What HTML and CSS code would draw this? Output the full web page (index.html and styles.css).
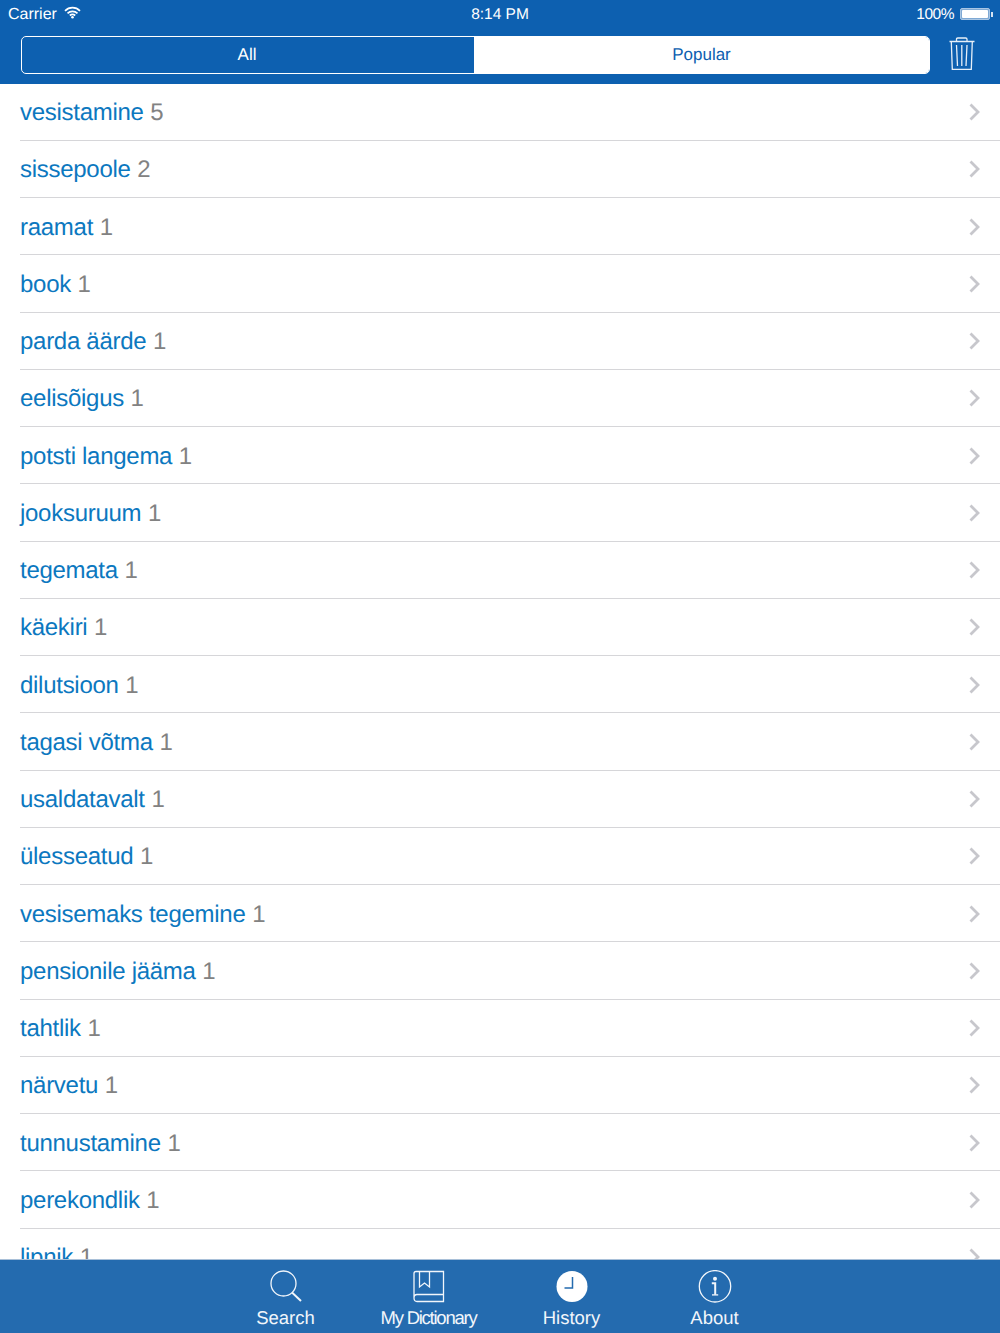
FILE: index.html
```html
<!DOCTYPE html>
<html lang="en">
<head>
    <meta charset="UTF-8" />
    <title>History</title>
    <link rel="stylesheet" href="styles.css">
</head>
<body>
    <div class="app">
        <header class="top">
            <div class="status">
                <div class="status-left">
                    <span>Carrier</span>
                    <svg class="wifi" width="17" height="13" viewBox="0 0 17 13">
                        <path d="M1 4.800C5.200 .6 11.800 .6 16 4.800" />
                        <path d="M3.500 7.300C6.200 4.700 10.800 4.700 13.500 7.300" />
                        <path d="M5.800 9.500C7.300 8.200 9.700 8.200 11.200 9.500" />
                        <circle cx="8.500" cy="11.300" r="1.300" />
                    </svg>
                </div>
                <div class="status-time">8:14 PM</div>
                <div class="status-right">
                    <span class="percent">100%</span>
                    <div class="battery"><div class="battery-fill"></div></div>
                    <div class="battery-tip"></div>
                </div>
            </div>
            <div class="toolbar">
                <div class="segments">
                    <div class="segment segment-on">All</div>
                    <div class="segment segment-off">Popular</div>
                </div>
                <svg class="trash" width="26" height="33" viewBox="0 0 26 33">
                    <path d="M.5 4.500H25.500M7.500 4.500V2.300Q7.500 1 8.800 1H16.700Q18 1 18 2.300V4.500" />
                    <path d="M2.300 4.500L3.300 32.300H22.300L23.300 4.500" />
                    <path d="M7.500 8L8.500 29M12.800 8V29M18 8L17 29" />
                </svg>
            </div>
        </header>

        <main class="list">
            <div class="row"><div class="row-text"><span class="word">vesistamine</span> <span class="count">5</span></div><svg class="chevron" width="11" height="18" viewBox="0 0 11 18"><path d="M1.500 1.500L9 9L1.500 16.500" /></svg></div>
            <div class="row"><div class="row-text"><span class="word">sissepoole</span> <span class="count">2</span></div><svg class="chevron" width="11" height="18" viewBox="0 0 11 18"><path d="M1.500 1.500L9 9L1.500 16.500" /></svg></div>
            <div class="row"><div class="row-text"><span class="word">raamat</span> <span class="count">1</span></div><svg class="chevron" width="11" height="18" viewBox="0 0 11 18"><path d="M1.500 1.500L9 9L1.500 16.500" /></svg></div>
            <div class="row"><div class="row-text"><span class="word">book</span> <span class="count">1</span></div><svg class="chevron" width="11" height="18" viewBox="0 0 11 18"><path d="M1.500 1.500L9 9L1.500 16.500" /></svg></div>
            <div class="row"><div class="row-text"><span class="word">parda äärde</span> <span class="count">1</span></div><svg class="chevron" width="11" height="18" viewBox="0 0 11 18"><path d="M1.500 1.500L9 9L1.500 16.500" /></svg></div>
            <div class="row"><div class="row-text"><span class="word">eelisõigus</span> <span class="count">1</span></div><svg class="chevron" width="11" height="18" viewBox="0 0 11 18"><path d="M1.500 1.500L9 9L1.500 16.500" /></svg></div>
            <div class="row"><div class="row-text"><span class="word">potsti langema</span> <span class="count">1</span></div><svg class="chevron" width="11" height="18" viewBox="0 0 11 18"><path d="M1.500 1.500L9 9L1.500 16.500" /></svg></div>
            <div class="row"><div class="row-text"><span class="word">jooksuruum</span> <span class="count">1</span></div><svg class="chevron" width="11" height="18" viewBox="0 0 11 18"><path d="M1.500 1.500L9 9L1.500 16.500" /></svg></div>
            <div class="row"><div class="row-text"><span class="word">tegemata</span> <span class="count">1</span></div><svg class="chevron" width="11" height="18" viewBox="0 0 11 18"><path d="M1.500 1.500L9 9L1.500 16.500" /></svg></div>
            <div class="row"><div class="row-text"><span class="word">käekiri</span> <span class="count">1</span></div><svg class="chevron" width="11" height="18" viewBox="0 0 11 18"><path d="M1.500 1.500L9 9L1.500 16.500" /></svg></div>
            <div class="row"><div class="row-text"><span class="word">dilutsioon</span> <span class="count">1</span></div><svg class="chevron" width="11" height="18" viewBox="0 0 11 18"><path d="M1.500 1.500L9 9L1.500 16.500" /></svg></div>
            <div class="row"><div class="row-text"><span class="word">tagasi võtma</span> <span class="count">1</span></div><svg class="chevron" width="11" height="18" viewBox="0 0 11 18"><path d="M1.500 1.500L9 9L1.500 16.500" /></svg></div>
            <div class="row"><div class="row-text"><span class="word">usaldatavalt</span> <span class="count">1</span></div><svg class="chevron" width="11" height="18" viewBox="0 0 11 18"><path d="M1.500 1.500L9 9L1.500 16.500" /></svg></div>
            <div class="row"><div class="row-text"><span class="word">ülesseatud</span> <span class="count">1</span></div><svg class="chevron" width="11" height="18" viewBox="0 0 11 18"><path d="M1.500 1.500L9 9L1.500 16.500" /></svg></div>
            <div class="row"><div class="row-text"><span class="word">vesisemaks tegemine</span> <span class="count">1</span></div><svg class="chevron" width="11" height="18" viewBox="0 0 11 18"><path d="M1.500 1.500L9 9L1.500 16.500" /></svg></div>
            <div class="row"><div class="row-text"><span class="word">pensionile jääma</span> <span class="count">1</span></div><svg class="chevron" width="11" height="18" viewBox="0 0 11 18"><path d="M1.500 1.500L9 9L1.500 16.500" /></svg></div>
            <div class="row"><div class="row-text"><span class="word">tahtlik</span> <span class="count">1</span></div><svg class="chevron" width="11" height="18" viewBox="0 0 11 18"><path d="M1.500 1.500L9 9L1.500 16.500" /></svg></div>
            <div class="row"><div class="row-text"><span class="word">närvetu</span> <span class="count">1</span></div><svg class="chevron" width="11" height="18" viewBox="0 0 11 18"><path d="M1.500 1.500L9 9L1.500 16.500" /></svg></div>
            <div class="row"><div class="row-text"><span class="word">tunnustamine</span> <span class="count">1</span></div><svg class="chevron" width="11" height="18" viewBox="0 0 11 18"><path d="M1.500 1.500L9 9L1.500 16.500" /></svg></div>
            <div class="row"><div class="row-text"><span class="word">perekondlik</span> <span class="count">1</span></div><svg class="chevron" width="11" height="18" viewBox="0 0 11 18"><path d="M1.500 1.500L9 9L1.500 16.500" /></svg></div>
            <div class="row"><div class="row-text"><span class="word">lipnik</span> <span class="count">1</span></div><svg class="chevron" width="11" height="18" viewBox="0 0 11 18"><path d="M1.500 1.500L9 9L1.500 16.500" /></svg></div>
        </main>

        <nav class="tabs">
            <div class="tab">
                <svg class="tab-icon" width="34" height="33" viewBox="0 0 34 33">
                    <circle cx="14.500" cy="13.500" r="12.500" />
                    <path d="M23 22.500L32 31" class="thick" />
                </svg>
                <span>Search</span>
            </div>
            <div class="tab">
                <svg class="tab-icon" width="34" height="33" viewBox="0 0 34 33">
                    <path d="M2 27.500V3.500Q2 1.500 4 1.500H31.500V31.500H5Q2 31.500 2 28Q2 24.500 5 24.500H31.500" />
                    <path d="M7.500 1.500V17L12.500 13L17.500 17V1.500" />
                </svg>
                <span class="tight">My Dictionary</span>
            </div>
            <div class="tab">
                <svg width="32" height="33" viewBox="0 0 32 33">
                    <circle class="clock-face" cx="16" cy="16.500" r="15.500" />
                    <path class="clock-hands" d="M16.500 7V18H8.500" />
                </svg>
                <span>History</span>
            </div>
            <div class="tab">
                <svg class="tab-icon" width="34" height="33" viewBox="0 0 34 33">
                    <circle cx="17" cy="16.300" r="15.700" />
                    <circle class="dot" cx="17" cy="8.700" r="2" />
                    <path d="M13.800 13.300H17.200V24.700" class="thick" />
                    <path d="M14 24.900H20.200" />
                </svg>
                <span>About</span>
            </div>
        </nav>
    </div>
</body>
</html>
```

FILE: styles.css
```css
* {
    box-sizing: border-box;
}
body {
    margin: 0;
    font-family: 'Liberation Sans', Arial, sans-serif;
    background: white;
    text-rendering: geometricPrecision;
}
.app {
    width: 1000px;
    height: 1333px;
    display: flex;
    flex-direction: column;
    overflow: hidden;
}

/* top bar */
.top {
    height: 83.500px;
    flex: none;
    background: #0d60b0;
    color: white;
}
.status {
    height: 36px;
    padding: 5px 8px 0;
    display: grid;
    grid-template-columns: 1fr auto 1fr;
    align-items: start;
    font-size: 16px;
    line-height: 20px;
}
.status-left {
    display: flex;
    align-items: center;
    gap: 7px;
}
.wifi {
    margin-top: -5px;
}
.wifi path {
    fill: none;
    stroke: white;
    stroke-width: 1.700;
}
.wifi circle {
    fill: white;
}
.status-time {
    font-size: 15.500px;
}
.status-right {
    display: flex;
    align-items: center;
    justify-content: flex-end;
}
.percent {
    font-size: 15.500px;
    letter-spacing: -0.500px;
}
.battery {
    width: 30px;
    height: 12px;
    margin-left: 6px;
    margin-top: -2px;
    padding: 1px;
    background: #7fa9d4;
    border: 1px solid #a9c6e4;
    border-radius: 2px;
}
.battery-fill {
    height: 100%;
    background: white;
    border-radius: 1px;
}
.battery-tip {
    width: 2px;
    height: 5px;
    margin-left: 1px;
    margin-right: -1px;
    margin-top: -2px;
    background: #d5e3f2;
}
.toolbar {
    display: flex;
    align-items: flex-start;
    padding-left: 21px;
}
.segments {
    width: 909px;
    height: 38px;
    display: flex;
    border: 1.500px solid white;
    border-radius: 5px;
    overflow: hidden;
    font-size: 17px;
    line-height: 35px;
    text-align: center;
}
.segment-on {
    width: 452px;
    padding-right: 2px;
    color: white;
}
.segment-off {
    flex: 1;
    background: white;
    color: #0d60b0;
}
.trash {
    margin: 1px 0 0 19px;
    fill: none;
    stroke: #e6eff8;
    stroke-width: 1.300;
}

/* word list */
.list {
    flex: 1;
    min-height: 0;
    overflow: hidden;
    border-bottom: 1px solid #a9c0d8;
}
.row {
    height: 57.250px;
    margin-left: 20px;
    padding: 1px 20px 0 0;
    display: flex;
    align-items: center;
    justify-content: space-between;
    border-bottom: 1px solid #d6d6d9;
}
.row-text {
    padding-top: 2px;
    font-size: 24px;
}
.word {
    color: #0c78bf;
    letter-spacing: -0.280px;
}
.count {
    color: #828282;
}
.chevron {
    fill: none;
    stroke: #c7c7cc;
    stroke-width: 2.800;
}

/* bottom tabs */
.tabs {
    height: 73px;
    flex: none;
    background: #246baf;
    color: #f2f6fb;
    display: flex;
    justify-content: center;
    padding-top: 10px;
    font-size: 18.500px;
}
.tab {
    width: 143px;
    display: flex;
    flex-direction: column;
    align-items: center;
    gap: 4px;
}
.tab-icon {
    fill: none;
    stroke: #f2f6fb;
    stroke-width: 1.300;
}
.tab-icon .thick {
    stroke-width: 2;
}
.tab-icon .dot {
    fill: #f2f6fb;
    stroke: none;
}
.tight {
    letter-spacing: -1.250px;
}
.clock-face {
    fill: white;
}
.clock-hands {
    fill: none;
    stroke: #246baf;
    stroke-width: 1.500;
}
```
